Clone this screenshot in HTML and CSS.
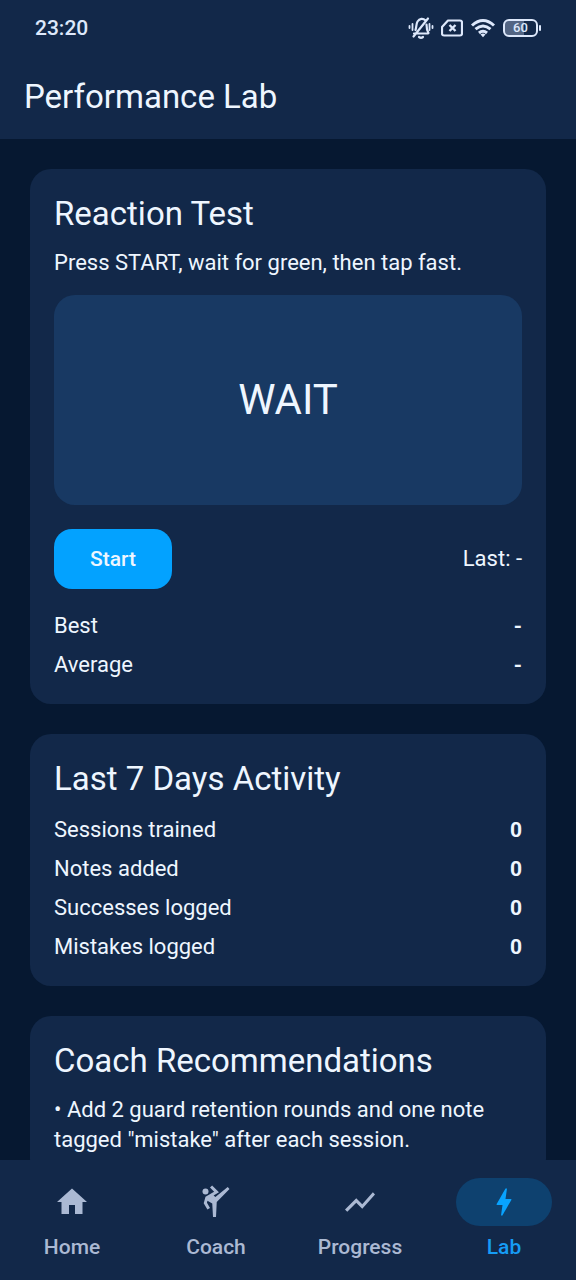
FILE: index.html
```html
<!DOCTYPE html>
<html lang="en">
<head>
<meta charset="utf-8">
<meta name="viewport" content="width=device-width, initial-scale=1">
<title>Performance Lab</title>
<link rel="stylesheet" href="styles.css">
</head>
<body>
<div class="app">
  <div class="status-bar">
    <span class="clock">23:20</span>
    <div class="status-icons">
      <svg width="26" height="24" viewBox="0 0 26 24" fill="none" stroke="currentColor" stroke-width="2.200" stroke-linecap="round">
        <path d="M6 17.500h14M7.500 14c1-2 .5-6 2-8.500 2-3 5.500-3.500 8-1M18.500 8.500c0 4 .500 6 2 8.500M11 21q2 1.500 4 0M5.500 20.500 20 2.500"/>
        <path d="M4.500 8v6M1.500 10v2M21.500 8v6M24.500 10v2" stroke-width="1.800"/>
      </svg>
      <svg width="22" height="18" viewBox="0 0 22 18" fill="none" stroke="currentColor" stroke-width="2.200" stroke-linejoin="round">
        <path d="M7 1.500h12a2 2 0 0 1 2 2v11a2 2 0 0 1-2 2H3a2 2 0 0 1-2-2V8z"/>
        <path d="m8.500 6 6 6M14.500 6l-6 6" stroke-width="2.400"/>
      </svg>
      <svg width="26" height="20" viewBox="0 0 26 20" fill="none" stroke="currentColor" stroke-width="3">
        <path d="M2 7.500Q13-2.500 24 7.500M5.500 11.200q7.500-6.500 15 0M9 15q4-3.500 8 0"/>
        <path d="m10.500 16.500 2.500 2.700 2.500-2.700q-2.500-1.800-5 0z" fill="currentColor" stroke="none"/>
      </svg>
      <span class="battery"><span class="battery-level">60</span></span>
    </div>
  </div>
  <header class="app-bar"><h1 class="title">Performance Lab</h1></header>
  <main class="content">
    <section class="card">
      <h2 class="title">Reaction Test</h2>
      <p class="hint">Press START, wait for green, then tap fast.</p>
      <button class="pad" type="button">WAIT</button>
      <div class="row actions">
        <button class="start" type="button">Start</button>
        <span>Last: -</span>
      </div>
      <dl class="stats">
        <div class="row"><dt>Best</dt><dd>-</dd></div>
        <div class="row"><dt>Average</dt><dd>-</dd></div>
      </dl>
    </section>
    <section class="card">
      <h2 class="title">Last 7 Days Activity</h2>
      <dl class="stats activity">
        <div class="row"><dt>Sessions trained</dt><dd>0</dd></div>
        <div class="row"><dt>Notes added</dt><dd>0</dd></div>
        <div class="row"><dt>Successes logged</dt><dd>0</dd></div>
        <div class="row"><dt>Mistakes logged</dt><dd>0</dd></div>
      </dl>
    </section>
    <section class="card">
      <h2 class="title">Coach Recommendations</h2>
      <p class="hint">• Add 2 guard retention rounds and one note tagged "mistake" after each session.</p>
    </section>
  </main>
  <nav class="nav">
    <a class="nav-item" href="#home">
      <span class="pill"><svg width="36" height="36" viewBox="0 0 24 24" fill="currentColor"><path d="M10 20v-6h4v6h5v-8h3L12 3 2 12h3v8z"/></svg></span>
      Home
    </a>
    <a class="nav-item" href="#coach">
      <span class="pill"><svg width="36" height="36" viewBox="0 0 24 24" fill="currentColor"><path d="m19.800 2-8.200 6.700-1.210-1.040 3.600-2.080L9.410 1 8 2.410l2.740 2.740L5 8.460l-1.190 4.290L6.270 17 8 16l-2.030-3.520.35-1.300L9.500 13l.5 9h2l.5-10L21 3.400z"/><circle cx="5" cy="5" r="2"/></svg></span>
      Coach
    </a>
    <a class="nav-item" href="#progress">
      <span class="pill"><svg width="36" height="36" viewBox="0 0 24 24" fill="currentColor"><path d="m3.500 18.490 6-6.010 4 4L22 6.920l-1.410-1.410-7.090 7.970-4-4L2 16.990z"/></svg></span>
      Progress
    </a>
    <a class="nav-item active" href="#lab" aria-current="page">
      <span class="pill"><svg width="36" height="36" viewBox="0 0 24 24" fill="currentColor"><path d="M11 21h-1l1-7H7.500c-.58 0-.57-.32-.38-.66s.05-.08.07-.12C8.480 10.940 10.420 7.540 13 3h1l-1 7h3.500c.49 0 .56.33.47.51l-.07.15C12.960 17.550 11 21 11 21z"/></svg></span>
      Lab
    </a>
  </nav>
</div>
</body>
</html>
```
FILE: styles.css
```css
* { box-sizing: border-box; }

body {
  margin: 0;
  background: #061831;
  color: #eef6ff;
  font: 400 22px/30px Roboto, "Noto Sans", sans-serif;
}

h1, h2, p, dl, dd { margin: 0; }

button { font: inherit; color: inherit; border: 0; cursor: pointer; }

.app { display: flex; flex-direction: column; height: 100vh; }

.status-bar {
  display: flex;
  justify-content: space-between;
  align-items: center;
  height: 56px;
  padding: 0 38px 0 35px;
  background: #122849;
  color: #dde8fb;
}

.clock { font-size: 21px; font-weight: 500; }

.status-icons { display: flex; align-items: center; gap: 7px; }

.battery {
  position: relative;
  display: flex;
  width: 35px;
  height: 18px;
  border: 2px solid currentColor;
  border-radius: 6px;
  background: linear-gradient(to right, #536583 60%, transparent 60%);
}

.battery::after {
  content: "";
  position: absolute;
  right: -5px;
  top: 4px;
  width: 2px;
  height: 6px;
  border-radius: 1px;
  background: currentColor;
}

.battery-level { flex: 1; text-align: center; font-size: 13px; line-height: 14px; font-weight: 500; }

.app-bar { padding: 20px 24px 21px; background: #122849; }

.title { font-size: 33px; line-height: 42px; font-weight: 400; }

.content {
  flex: 1;
  min-height: 0;
  overflow-y: auto;
  scrollbar-width: none;
  padding: 30px;
}

.card { padding: 24px; border-radius: 21px; background: #122849; }
.card + .card { margin-top: 30px; }

.hint { margin-top: 13px; }

.pad {
  display: block;
  width: 100%;
  height: 210px;
  margin-top: 17px;
  border-radius: 21px;
  background: #183963;
  font-size: 42px;
}

.row { display: flex; justify-content: space-between; align-items: center; }

.actions { margin-top: 24px; }

.start {
  padding: 15px 36px;
  border-radius: 18px;
  background: #03a2ff;
  font-size: 21px;
  font-weight: 500;
}

.stats { display: grid; gap: 9px; margin-top: 22px; }
.stats dd { font-size: 21px; font-weight: 700; }
.activity { margin-top: 15px; }

.nav {
  display: flex;
  padding: 18px 0;
  background: #122849;
}

.nav-item {
  flex: 1;
  display: flex;
  flex-direction: column;
  align-items: center;
  gap: 6px;
  color: #abb9d3;
  font-size: 21px;
  font-weight: 500;
  text-decoration: none;
}

.pill {
  display: flex;
  justify-content: center;
  align-items: center;
  width: 96px;
  height: 48px;
  border-radius: 24px;
}

.active { color: #169cf5; }
.active .pill { background: #0e416f; color: #08a3ff; }
```
